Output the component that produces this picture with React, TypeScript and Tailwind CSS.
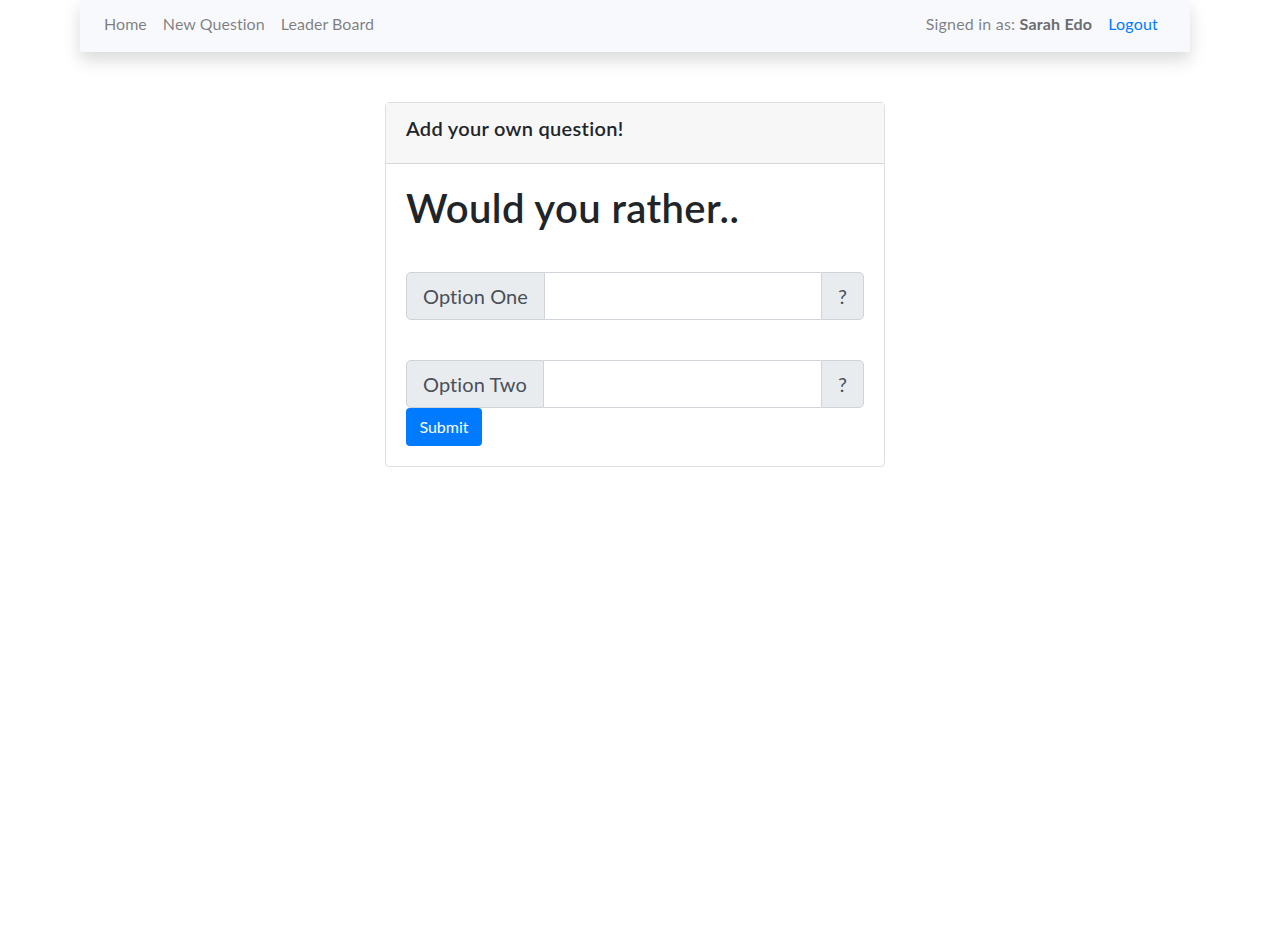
const font = 'font-["Segoe_UI",Lato,"Noto_Sans",sans-serif]'

function OptionField({ label }: { label: string }) {
  return (
    <div className="flex h-12 w-full text-[20px] leading-[30px] tracking-[0.1px] text-[#495057]">
      <span className="flex items-center rounded-l-[5px] border border-[#ced4da] bg-[#e9ecef] px-4">
        {label}
      </span>
      <input
        type="text"
        className="min-w-0 flex-1 border-y border-[#ced4da] bg-white px-4 outline-none"
      />
      <span className="flex w-[43px] items-center justify-center rounded-r-[5px] border border-[#ced4da] bg-[#e9ecef]">
        ?
      </span>
    </div>
  )
}

export default function App() {
  return (
    <div className={`${font} min-h-screen bg-white pl-[2px] text-[#212529]`}>
      <nav className="mx-auto flex h-[52px] w-[1110px] items-center justify-between bg-[#f8f9fd] pr-6 pb-1 pl-4 text-base shadow-[0_8px_16px_rgba(0,0,0,0.15)]">
        <ul className="flex tracking-[0.05px] text-black/50">
          <li className="px-2">Home</li>
          <li className="px-2">New Question</li>
          <li className="px-2">Leader Board</li>
        </ul>
        <div className="flex items-center tracking-[0.2px]">
          <span className="mr-2 text-black/50">
            Signed in as: <b className="font-bold text-[#6c6c70]">Sarah Edo</b>
          </span>
          <a className="px-2 text-[#007bff]">Logout</a>
        </div>
      </nav>

      <div className="mx-auto mt-[50px] w-[500px] rounded-[4px] border border-black/[0.125]">
        <div className="flex h-[61px] items-center border-b border-black/[0.125] bg-[#f7f7f7] px-5 pb-[10px] text-[20px] font-semibold tracking-[0.3px]">
          Add your own question!
        </div>
        <div className="p-5">
          <h1 className="mb-10 text-[40px] leading-[48px] font-semibold tracking-[0.4px]">
            Would you rather..
          </h1>
          <OptionField label="Option One" />
          <div className="h-10" />
          <OptionField label="Option Two" />
          <button className="h-[38px] w-[76px] rounded-[4px] bg-[#007bff] text-base text-white">
            Submit
          </button>
        </div>
      </div>
    </div>
  )
}
